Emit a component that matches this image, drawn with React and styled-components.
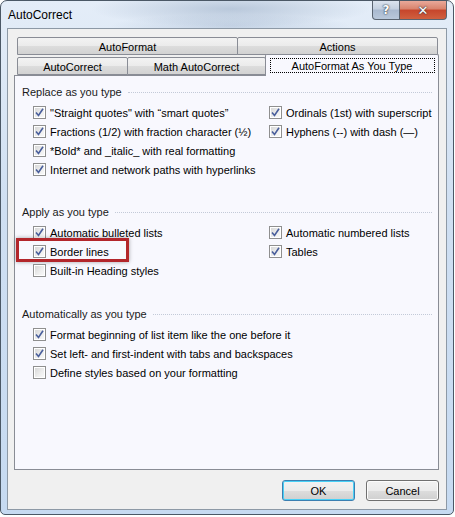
import React from 'react';
import styled, { createGlobalStyle } from 'styled-components';

const GlobalStyle = createGlobalStyle`
  html, body {
    margin: 0;
    background: #ffffff;
  }
  body {
    font-family: "Liberation Sans", Arial, sans-serif;
    font-size: 11px;
    color: #000;
  }
`;

const Window = styled.div`
  width: 454px;
  height: 515px;
  border: 1px solid #4b5866;
  border-radius: 7px 7px 5px 5px;
  background:
    radial-gradient(ellipse 140px 18px at 230px 8px, rgba(150, 170, 195, 0.55), transparent),
    radial-gradient(ellipse 120px 12px at 230px 25px, rgba(160, 180, 205, 0.45), transparent),
    linear-gradient(180deg, #e4edf8 0%, #cfdff2 40%, #c6daf1 100%);
  display: flex;
  flex-direction: column;
  padding: 0 6px 4px 6px;
  box-sizing: border-box;
  overflow: hidden;
`;

const TitleBar = styled.div`
  height: 27px;
  flex-shrink: 0;
  display: flex;
  align-items: flex-start;
  justify-content: space-between;
`;

const Title = styled.div`
  padding: 7px 0 0 1px;
  font-size: 12px;
  color: #000;
`;

const Caption = styled.div`
  display: flex;
`;

const CaptionButton = styled.div`
  width: ${p => p.$w}px;
  height: 19px;
  box-sizing: border-box;
  border: 1px solid #5a6470;
  border-top: none;
  display: flex;
  align-items: center;
  justify-content: center;
  font-family: "DejaVu Sans", sans-serif;
  font-weight: bold;
  color: #fff;
  text-shadow: 0 0 2px #2a3440, 0 0 1px #2a3440;
  background: ${p => p.$red
    ? 'linear-gradient(180deg, #e9a99a 0%, #d8826c 45%, #c6452b 50%, #d0603f 100%)'
    : 'linear-gradient(180deg, #dbe3ee 0%, #c3cfdf 45%, #a9b9cf 50%, #b9c8db 100%)'};
  border-radius: ${p => p.$red ? '0 0 4px 0' : '0 0 0 4px'};
  border-left: ${p => p.$red ? 'none' : '1px solid #5a6470'};
  font-size: ${p => p.$red ? '13px' : '12px'};
`;

const Client = styled.div`
  flex: 1;
  min-height: 0;
  border: 1px solid #8d99a6;
  background: #f0f0f0;
  padding: 7px 7px 0 6px;
  display: flex;
  flex-direction: column;
`;

const TabRow = styled.div`
  display: flex;
  flex-shrink: 0;
  padding-left: 3px;
  height: ${p => p.$h}px;
  align-items: flex-end;
`;

const Tab = styled.div`
  width: ${p => p.$w}px;
  height: ${p => p.$active ? 22 : 18}px;
  box-sizing: border-box;
  border: 1px solid #898c95;
  border-bottom: ${p => p.$active ? 'none' : '1px solid #898c95'};
  margin-left: ${p => p.$first ? 0 : -1}px;
  border-radius: 2px 2px 0 0;
  display: flex;
  align-items: center;
  justify-content: center;
  background: ${p => p.$active
    ? '#f8f8fe'
    : 'linear-gradient(180deg, #f3f3f3 0%, #ebebeb 50%, #dddddd 51%, #d2d2d2 100%)'};
  position: relative;
  z-index: ${p => p.$active ? 2 : 1};
  margin-bottom: ${p => p.$active ? -1 : 0}px;
  padding-top: 1px;

  ${p => p.$active && `
    &::after {
      content: '';
      position: absolute;
      left: 4px;
      right: 3px;
      top: 3px;
      bottom: 3px;
      border: 1px dotted #000;
    }
  `}
`;

const Panel = styled.div`
  height: 395px;
  flex-shrink: 0;
  box-sizing: border-box;
  border: 1px solid #898c95;
  background: #f8f8fe;
  padding: 9px 0 0 0;
  display: flex;
  flex-direction: column;
`;

const Section = styled.div`
  margin-bottom: ${p => p.$gap}px;
`;

const GroupHeader = styled.div`
  display: flex;
  align-items: center;
  padding-left: 7px;
  padding-right: 6px;
  height: 14px;
  color: #1a1a1a;

  &::after {
    content: '';
    flex: 1;
    margin-left: 6px;
    border-top: 1px dotted #c3cad8;
  }
`;

const Options = styled.div`
  display: grid;
  grid-template-columns: 236px 1fr;
  grid-auto-rows: 19px;
  padding-left: 18px;
  margin-top: 4px;
`;

const Option = styled.label`
  display: flex;
  align-items: center;
  gap: 4px;
  grid-column: ${p => p.$col};
  grid-row: ${p => p.$row};
  position: relative;
  white-space: nowrap;
`;

const Box = styled.span`
  width: 13px;
  height: 13px;
  box-sizing: border-box;
  border: 1px solid #8f8f8f;
  background: #fff;
  padding: 1px;
  display: flex;
  flex-shrink: 0;
`;

const BoxInner = styled.span`
  flex: 1;
  background: linear-gradient(135deg, #d8d8d8 0%, #eeeeee 60%, #f8f8f8 100%);
  display: flex;
  align-items: center;
  justify-content: center;
`;

const Highlight = styled.span`
  position: absolute;
  left: -17px;
  top: -4px;
  width: 113px;
  height: 24px;
  box-sizing: border-box;
  border: 3px solid #b3262b;
  box-shadow: 0 0 4px rgba(0, 0, 0, 0.35);
  pointer-events: none;
`;

const Buttons = styled.div`
  display: flex;
  justify-content: flex-end;
  gap: 11px;
  margin-top: 10px;
`;

const Button = styled.button`
  width: 73px;
  height: 21px;
  font-family: inherit;
  font-size: 11px;
  color: #000;
  border-radius: 3px;
  border: 1px solid ${p => p.$default ? '#3c7fb1' : '#707070'};
  box-shadow: inset 0 0 0 1px ${p => p.$default ? '#48d0f6' : '#fcfcfc'};
  background: linear-gradient(180deg, #f2f2f2 0%, #ebebeb 50%, #dddddd 51%, #cfcfcf 100%);
  padding: 0;
`;

function Check() {
  return (
    <svg width="9" height="9" viewBox="0 0 9 9">
      <path d="M1 4.5 L3.5 7.5 L8 0.8" fill="none" stroke="#4a5f9c" strokeWidth="1.6" />
    </svg>
  );
}

function CheckBox({ checked, label, col, row, highlight }) {
  return (
    <Option $col={col} $row={row}>
      <Box>
        <BoxInner>{checked && <Check />}</BoxInner>
      </Box>
      {label}
      {highlight && <Highlight />}
    </Option>
  );
}

const sections = [
  {
    title: 'Replace as you type',
    gap: 26,
    items: [
      ['"Straight quotes" with \u201Csmart quotes\u201D', true, 1, 1],
      ['Fractions (1/2) with fraction character (\u00BD)', true, 1, 2],
      ['*Bold* and _italic_ with real formatting', true, 1, 3],
      ['Internet and network paths with hyperlinks', true, 1, 4],
      ['Ordinals (1st) with superscript', true, 2, 1],
      ['Hyphens (--) with dash (\u2014)', true, 2, 2],
    ],
  },
  {
    title: 'Apply as you type',
    gap: 27,
    items: [
      ['Automatic bulleted lists', true, 1, 1],
      ['Border lines', true, 1, 2, true],
      ['Built-in Heading styles', false, 1, 3],
      ['Automatic numbered lists', true, 2, 1],
      ['Tables', true, 2, 2],
    ],
  },
  {
    title: 'Automatically as you type',
    gap: 0,
    items: [
      ['Format beginning of list item like the one before it', true, 1, 1],
      ['Set left- and first-indent with tabs and backspaces', true, 1, 2],
      ['Define styles based on your formatting', false, 1, 3],
    ],
  },
];

export default function App() {
  return (
    <>
      <GlobalStyle />
      <Window>
        <TitleBar>
          <Title>AutoCorrect</Title>
          <Caption>
            <CaptionButton $w={28}>?</CaptionButton>
            <CaptionButton $w={47} $red>✕</CaptionButton>
          </Caption>
        </TitleBar>
        <Client>
          <TabRow $h={19}>
            <Tab $w={221} $first>AutoFormat</Tab>
            <Tab $w={201}>Actions</Tab>
          </TabRow>
          <TabRow $h={20}>
            <Tab $w={111} $first>AutoCorrect</Tab>
            <Tab $w={139}>Math AutoCorrect</Tab>
            <Tab $w={174} $active>AutoFormat As You Type</Tab>
          </TabRow>
          <Panel>
            {sections.map(s => (
              <Section key={s.title} $gap={s.gap}>
                <GroupHeader>{s.title}</GroupHeader>
                <Options>
                  {s.items.map(([label, checked, col, row, hl]) => (
                    <CheckBox key={label} label={label} checked={checked} col={col} row={row} highlight={hl} />
                  ))}
                </Options>
              </Section>
            ))}
          </Panel>
          <Buttons>
            <Button $default>OK</Button>
            <Button>Cancel</Button>
          </Buttons>
        </Client>
      </Window>
    </>
  );
}
